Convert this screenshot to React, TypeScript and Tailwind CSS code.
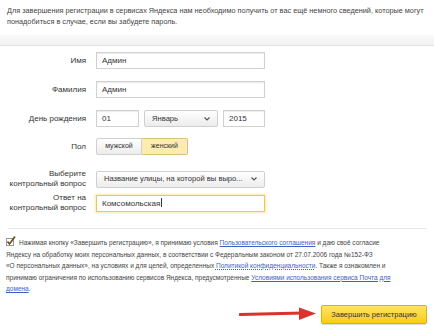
import React from "react";

const Label = ({ children }: { children: React.ReactNode }) => (
  <div className="w-[86px] shrink-0 text-right text-[8px] leading-[10px] text-[#333]">
    {children}
  </div>
);

const Input = ({ value, className = "" }: { value: string; className?: string }) => (
  <div
    className={`h-[17px] border border-[#d0d0d0] bg-white px-[5px] text-[8px] leading-[15px] text-[#333] shadow-[inset_0_1px_1px_rgba(0,0,0,0.08)] ${className}`}
  >
    {value}
  </div>
);

const Select = ({ value, className = "" }: { value: string; className?: string }) => (
  <div
    className={`flex h-[17px] items-center justify-between rounded-[2px] border border-[#cfcfcf] bg-gradient-to-b from-white to-[#ececec] px-[7px] text-[7.6px] text-[#333] ${className}`}
  >
    <span className="whitespace-nowrap">{value}</span>
    <svg width="6" height="4" viewBox="0 0 6 4" className="ml-1 shrink-0">
      <path d="M0.5 0.5 L3 3 L5.5 0.5" stroke="#555" strokeWidth="1.2" fill="none" />
    </svg>
  </div>
);

const App = () => {
  return (
    <div
      className="h-[332px] w-[434px] overflow-hidden bg-white"
      style={{ fontFamily: '"Liberation Sans", Arial, sans-serif' }}
    >
      {/* intro */}
      <p className="whitespace-nowrap px-[7px] pt-[5px] text-[7.3px] leading-[11px] text-[#444]">
        Для завершения регистрации в сервисах Яндекса нам необходимо получить от вас ещё немного сведений, которые могут
        <br />
        понадобиться в случае, если вы забудете пароль.
      </p>
      <div className="mt-[8px] h-[11px] border-b border-[#e2e2e2] bg-gradient-to-b from-[#fafafa] to-[#f1f1f1]" />

      {/* form */}
      <div className="flex flex-col pt-[6px]">
        <div className="flex items-center gap-[10px]">
          <Label>Имя</Label>
          <Input value="Админ" className="w-[169px]" />
        </div>
        <div className="mt-[12px] flex items-center gap-[10px]">
          <Label>Фамилия</Label>
          <Input value="Админ" className="w-[169px]" />
        </div>
        <div className="mt-[12px] flex items-center gap-[10px]">
          <Label>День рождения</Label>
          <Input value="01" className="w-[43px]" />
          <Select value="Январь" className="ml-[-5px] w-[74px]" />
          <Input value="2015" className="ml-[-5px] w-[42px]" />
        </div>
        <div className="mt-[11px] flex items-center gap-[10px]">
          <Label>Пол</Label>
          <div className="flex h-[17px] text-[7px] text-[#333]">
            <div className="flex w-[46px] items-center justify-center rounded-l-[2px] border border-[#cfcfcf] bg-gradient-to-b from-white to-[#ececec]">
              мужской
            </div>
            <div className="flex w-[46px] items-center justify-center rounded-r-[2px] border border-l-0 border-[#d9c27a] bg-[#fdecb0]">
              женский
            </div>
          </div>
        </div>
        <div className="mt-[14px] flex items-center gap-[10px]">
          <Label>
            Выберите
            <br />
            контрольный вопрос
          </Label>
          <Select value="Название улицы, на которой вы выро..." className="w-[169px]" />
        </div>
        <div className="mt-[4px] flex items-center gap-[10px]">
          <Label>
            Ответ на
            <br />
            контрольный вопрос
          </Label>
          <div className="h-[17px] w-[169px] border border-[#f0c94a] bg-white px-[5px] text-[8px] leading-[15px] text-[#333] shadow-[0_0_2px_1px_rgba(255,214,80,0.5)]">
            Комсомольская<span className="ml-[1px] inline-block h-[9px] w-px translate-y-[1px] bg-[#333]" />
          </div>
        </div>
      </div>

      <div className="mx-[8px] mt-[15px] border-t border-[#e6e6e6]" />

      {/* agreement */}
      <p className="whitespace-nowrap px-[6px] pt-[7px] text-[6.5px] leading-[11.6px] text-[#444]">
        <svg width="10" height="10" viewBox="0 0 10 10" className="mr-[3px] inline-block align-[-1px]">
          <rect x="0.5" y="2.5" width="7" height="7" fill="#fff" stroke="#999" />
          <path d="M1.5 5.5 L3.5 8 L9 0.5" stroke="#6b4a1a" strokeWidth="1.6" fill="none" />
        </svg>
        Нажимая кнопку «Завершить регистрацию», я принимаю условия{" "}
        <span className="text-[#3f5ec7] underline">Пользовательского соглашения</span> и даю своё согласие
        <br />
        Яндексу на обработку моих персональных данных, в соответствии с Федеральным законом от 27.07.2006 года №152-ФЗ
        <br />
        «О персональных данных», на условиях и для целей, определенных{" "}
        <span className="text-[#3f5ec7] underline decoration-dotted">Политикой конфиденциальности</span>. Также я ознакомлен и
        <br />
        принимаю ограничения по использованию сервисов Яндекса, предусмотренные{" "}
        <span className="text-[#3f5ec7] underline">Условиями использования сервиса Почта для</span>
        <br />
        <span className="text-[#3f5ec7] underline">домена</span>.
      </p>

      {/* submit */}
      <div className="mt-[10px] flex items-center justify-end gap-[4px] pr-[7px]">
        <svg width="78" height="14" viewBox="0 0 78 14">
          <path d="M1 7.5 L64 6" stroke="#d9332b" strokeWidth="3" strokeLinecap="round" fill="none" />
          <path d="M60 0.5 L77 6.5 L60 13 Z" fill="#d9332b" />
        </svg>
        <div className="flex h-[19px] w-[106px] items-center justify-center rounded-[2px] border border-[#e0b100] bg-gradient-to-b from-[#ffe55c] to-[#f9cc0c] text-[7.5px] text-[#333] shadow-[0_1px_1px_rgba(0,0,0,0.15)]">
          Завершить регистрацию
        </div>
      </div>
    </div>
  );
};

export default App;
